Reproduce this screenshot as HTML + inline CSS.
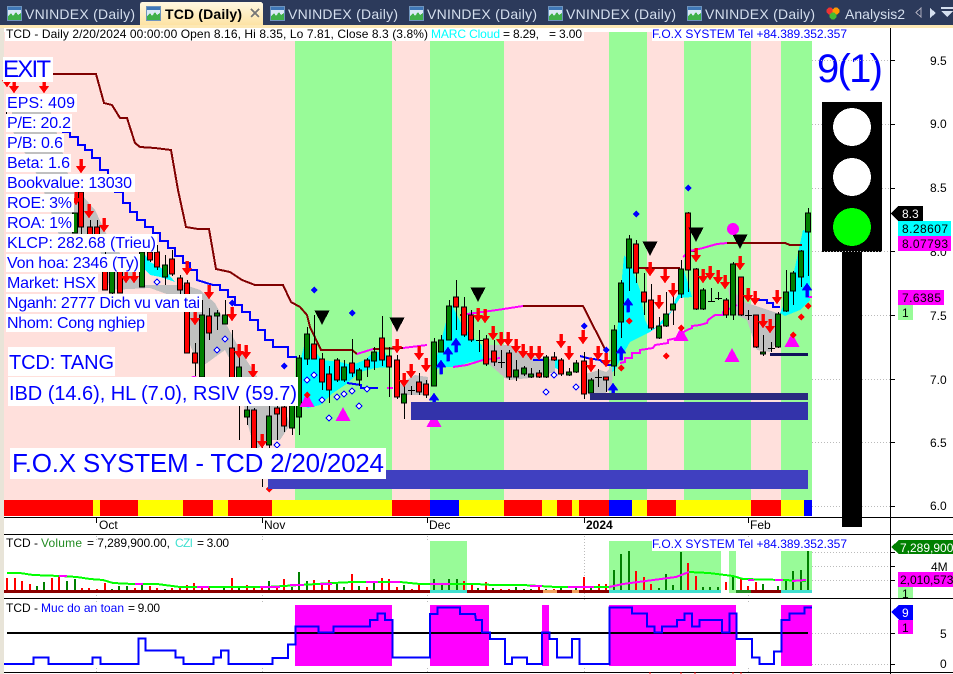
<!DOCTYPE html>
<html><head><meta charset="utf-8"><title>TCD (Daily)</title>
<style>
html,body{margin:0;padding:0;background:#fff;overflow:hidden}
svg{display:block;shape-rendering:crispEdges;font-family:"Liberation Sans",sans-serif}
.t{font-size:12px;fill:#000}
.l{font-size:16px;fill:#0000ff}
.tab{font-size:14px;fill:#d5dfee}
</style></head><body>
<svg width="953" height="674" viewBox="0 0 953 674" xmlns="http://www.w3.org/2000/svg">
<defs>
<path id="d" d="M-1.5-14h3v7h3.5L0 0-5-7h3.5z" fill="#f00" stroke="#f00" stroke-width=".4"/>
<path id="u" d="M-1.5 14h3V7H5L0 0-5 7h3.5z" fill="#00f" stroke="#00f" stroke-width=".4"/>
<path id="tr" d="M0-14L7.5 0h-15z" fill="#f0f"/>
<path id="bt" d="M0 0L-7.5-14.500h15z" fill="#000"/>
<path id="bd" d="M0-3.500L3.500 0 0 3.500-3.500 0z" fill="#00f"/>
<path id="rd" d="M0-3.500L3.500 0 0 3.500-3.500 0z" fill="#f00"/>
<path id="hd" d="M0-3L3 0 0 3-3 0z" fill="#fff" stroke="#00f"/>
<g id="ic"><rect x=".5" y=".5" width="14" height="14" fill="#dbe9f6" stroke="#6f94bd"/><rect x="1" y="1" width="13" height="3" fill="#3f78b8"/><path d="M1 14V10L4 7l2 3 3-4 2 3 3-2v7z" fill="#3fb04a"/></g>
<linearGradient id="at" x1="0" y1="0" x2="0" y2="1"><stop offset="0" stop-color="#fff8e2"/><stop offset="1" stop-color="#fde3a4"/></linearGradient>
</defs>

<!-- tab bar -->
<rect width="953" height="25" fill="#2c3a5b"/>
<rect y="25" width="953" height="3" fill="#fde8b4"/>
<rect y="28" width="4" height="646" fill="#e8e4d8"/>
<path d="M140 25V5q0-3 3-3h117q3 0 3 3v20z" fill="url(#at)"/>
<use href="#ic" x="7" y="6"/><use href="#ic" x="146" y="6"/><use href="#ic" x="270" y="6"/><use href="#ic" x="409" y="6"/><use href="#ic" x="548" y="6"/><use href="#ic" x="687" y="6"/>
<text class="tab" x="25" y="19" textLength="110">VNINDEX (Daily)</text>
<text x="165" y="19" font-size="14" font-weight="bold" fill="#000" textLength="77">TCD (Daily)</text>
<path d="M251 9l8 8M259 9l-8 8" stroke="#777" stroke-width="1.500" fill="none"/>
<text class="tab" x="288" y="19" textLength="110">VNINDEX (Daily)</text>
<text class="tab" x="427" y="19" textLength="110">VNINDEX (Daily)</text>
<text class="tab" x="566" y="19" textLength="110">VNINDEX (Daily)</text>
<text class="tab" x="705" y="19" textLength="110">VNINDEX (Daily)</text>
<circle cx="830" cy="11" r="3.500" fill="#e33"/><circle cx="836" cy="11" r="3.500" fill="#f90"/><circle cx="833" cy="16" r="3.500" fill="#4b3"/>
<text class="tab" x="845" y="19" textLength="60">Analysis2</text>
<path d="M921 8v9l-5-4.500z" fill="none" stroke="#aab"/>
<path d="M930 8v10l6-5z" fill="#d5dfee"/>
<path d="M941 7h12v2h-12zM941 11h12l-6 6z" fill="#d5dfee"/>

<!-- main pane -->
<rect x="4" y="28" width="949" height="646" fill="#fff"/>
<g>
<rect x="4" y="32" width="291" height="468" fill="#ffe0dc"/>
<rect x="295" y="32" width="97" height="468" fill="#98fb98"/>
<rect x="392" y="32" width="38" height="468" fill="#ffe0dc"/>
<rect x="430" y="32" width="74" height="468" fill="#98fb98"/>
<rect x="504" y="32" width="105" height="468" fill="#ffe0dc"/>
<rect x="609" y="32" width="38" height="468" fill="#98fb98"/>
<rect x="647" y="32" width="37" height="468" fill="#ffe0dc"/>
<rect x="684" y="32" width="67" height="468" fill="#98fb98"/>
<rect x="751" y="32" width="30" height="468" fill="#ffe0dc"/>
<rect x="781" y="32" width="31" height="468" fill="#98fb98"/>
</g>
<!-- signal bar -->
<g>
<rect x="4" y="500" width="89" height="16" fill="#f00"/><rect x="93" y="500" width="7" height="16" fill="#ff0"/><rect x="100" y="500" width="38" height="16" fill="#f00"/><rect x="138" y="500" width="45" height="16" fill="#ff0"/><rect x="183" y="500" width="30" height="16" fill="#f00"/><rect x="213" y="500" width="15" height="16" fill="#ff0"/><rect x="228" y="500" width="44" height="16" fill="#f00"/><rect x="272" y="500" width="120" height="16" fill="#ff0"/><rect x="392" y="500" width="38" height="16" fill="#f00"/><rect x="430" y="500" width="29" height="16" fill="#00f"/><rect x="459" y="500" width="45" height="16" fill="#ff0"/><rect x="504" y="500" width="38" height="16" fill="#f00"/><rect x="542" y="500" width="15" height="16" fill="#ff0"/><rect x="557" y="500" width="15" height="16" fill="#f00"/><rect x="572" y="500" width="7" height="16" fill="#ff0"/><rect x="579" y="500" width="30" height="16" fill="#f00"/><rect x="609" y="500" width="23" height="16" fill="#00f"/><rect x="632" y="500" width="15" height="16" fill="#ff0"/><rect x="647" y="500" width="29" height="16" fill="#f00"/><rect x="676" y="500" width="75" height="16" fill="#ff0"/><rect x="751" y="500" width="30" height="16" fill="#f00"/><rect x="781" y="500" width="23" height="16" fill="#ff0"/><rect x="804" y="500" width="8" height="16" fill="#00f"/>
</g>
<!-- clouds -->
<g fill="#c0c0c0">
<polygon points="12,105 50,110 62,150 72,190 82,195 95,210 107,235 118,250 130,270 145,285 185,285 200,290 215,303 225,322 240,350 258,378 268,398 285,410 290,425 280,440 270,440 255,450 248,425 238,375 225,350 200,368 190,345 183,300 150,288 110,290 100,250 70,240 60,238 40,180 12,130"/>
<polygon points="398,385 415,375 428,377 428,395 400,395"/>
<polygon points="484,345 510,345 530,356 555,360 555,372 530,378 510,380 505,378 490,365 484,360"/>
<polygon points="581,375 600,370 606,372 613,366 612,385 604,395 590,395 584,390"/>
<polygon points="728,287 747,303 777,313 775,345 770,352 757,350 747,320 732,313"/>
</g>
<g fill="#00ffff">
<polygon points="143,252 150,262 165,270 175,282 160,277 150,275 143,268"/>
<polygon points="298,370 303,350 307,335 311,346 322,360 340,362 352,365 365,360 373,352 385,352 392,365 390,367 375,368 360,372 345,385 333,393 320,405 308,408 302,405"/>
<polygon points="433,370 440,345 447,318 452,305 462,325 470,335 482,345 483,360 470,362 455,367 445,367"/>
<polygon points="612,372 616,345 624,255 630,262 640,290 645,320 650,330 657,327 662,320 672,310 675,300 681,290 684,270 690,290 692,297 680,298 665,322 650,332 630,342 620,360 615,370"/>
<polygon points="780,313 790,290 803,230 810,232 810,300 800,310 785,316"/>
<polygon points="555,358 562,362 560,370 555,368"/>
</g>
<!-- dark red line -->
<g fill="none" stroke-width="2">
<polyline stroke="#800000" points="53,74 96,74 104,103 112,105 120,118 127,118 135,143 140,147 155,148 171,150 178,190 186,227 198,229 209,229 216,269 230,272 242,280 255,285 283,285 291,302 300,307 307,315 310,327 321,350 352,350 357,354"/>
<polyline stroke="#800000" points="373,349 403,348"/>
<polyline stroke="#800000" points="460,315 467,314"/>
<polyline stroke="#800000" points="523,306 583,306 607,353"/>
<polyline stroke="#800000" points="638,268 680,268"/>
<polyline stroke="#800000" points="690,251 697,251"/>
<polyline stroke="#800000" points="727,243 785,243 790,245 802,245"/>
<!-- blue stair -->
<polyline stroke="#00f" points="62,132 70,132 70,137 78,137 78,145 85,145 85,150 92,150 92,158 100,158 100,170 108,170 108,180 115,180 115,192 123,192 123,203 130,203 130,212 137,212 137,220 145,220 145,227 153,227 153,233 160,233 160,241 168,241 168,248 175,248 175,256 183,256 183,263 190,263 190,270 197,270 197,280 213,285 220,285 220,290 228,290 228,297 235,297 235,305 242,305 242,312 250,312 250,320 258,320 258,330 265,330 265,340 273,340 273,347 288,347 288,357 297,357"/>
<polyline stroke="#00f" points="347,383 361,385 361,388 378,388"/>
<polyline stroke="#00f" points="533,360 543,360"/>
<polyline stroke="#00f" points="580,356 587,358 600,360 606,365 612,365"/>
<polyline stroke="#00f" points="757,300 767,300 767,303 773,303 773,307 780,307"/>
<!-- magenta -->
<polyline stroke="#f0f" points="357,354 373,349"/>
<polyline stroke="#f0f" points="387,388 393,388"/>
<polyline stroke="#f0f" points="403,348 427,345"/>
<polyline stroke="#f0f" points="467,314 497,310 523,306"/>
<polyline stroke="#f0f" points="683,257 690,251 703,248 717,244 727,243"/>
<polyline stroke="#f0f" points="453,367 467,365 483,360 500,358"/>
<polyline stroke="#f0f" points="620,363 625,362 625,358 632,358 632,353 640,353 640,350 653,348 655,345 668,343 668,340 677,338 682,333 687,330 692,328 692,326 700,325 707,323 708,320 715,315 723,315 723,312 737,305"/>
<polyline stroke="#f0f" points="808,297 812,297"/>
</g>
<!-- wicks -->
<path fill="none" stroke="#000" d="M6.500 100V123M81.500 188V240M90.500 220V250M97.500 220V250M105.500 250V290M112.500 255V300M120.500 262V293M142.500 245V287M150.500 245V262M157.500 245V270M165.500 255V285M172.500 250V276M180.500 275V295M187.500 280V353M195.500 343V376M202.500 300V378M209.500 308V340M217.500 310V330M225.500 300V324M232.500 330V380M239.500 345V440M247.500 400V425M254.500 408V450M262.500 445V487M269.500 405V450M277.500 395V440M284.500 400V432M292.500 400V435M299.500 355V435M307.500 327V365M314.500 315V359M322.500 353V390M329.500 366V403M337.500 358V382M344.500 360V382M352.500 339V377M359.500 368V386M367.500 358V377M374.500 347V370M382.500 316V366M389.500 347V397M397.500 355V399M404.500 385V419M411.500 386V395M419.500 373V395M426.500 380V398M434.500 338V386M441.500 335V352M449.500 300V340M456.500 280V330M464.500 297V337M471.500 310V342M479.500 330V352M486.500 335V366M494.500 340V366M501.500 350V368M509.500 350V380M516.500 360V381M524.500 366V376M531.500 368V378M539.500 370V378M546.500 355V378M554.500 352V361M561.500 358V376M569.500 368V376M576.500 360V373M584.500 352V399M591.500 378V395M598.500 369V387M606.500 378V392M614.500 325V376M621.500 280V338M629.500 235V291M636.500 240V283M644.500 273V315M651.500 284V330M659.500 317V339M666.500 292V327M673.500 284V325M681.500 260V298M688.500 212V292M696.500 268V310M703.500 288V310M711.500 288V302M718.500 292V300M726.500 298V318M733.500 262V320M741.500 277V316M748.500 310V320M756.500 315V348M763.500 335V356M771.500 342V352M778.500 312V348M786.500 270V312M793.500 271V305M801.500 250V287M808.500 208V276M408 390.500h7M476 340.500h7M498 362.500h7M595 377.500h7M708 301.500h7M715 298.500h7M745 315.500h7M768 348.500h7"/>
<!-- red bodies -->
<path fill="#f00" stroke="#000" d="M78.500 192h5V227h-5zM87.500 227h5V250h-5zM94.500 227h5V250h-5zM102.500 262h5V290h-5zM117.500 262h5V293h-5zM147.500 252h5V260h-5zM154.500 252h5V267h-5zM169.500 259h5V274h-5zM177.500 278h5V290h-5zM184.500 283h5V353h-5zM192.500 353h5V363h-5zM206.500 316h5V333h-5zM229.500 348h5V380h-5zM251.500 410h5V450h-5zM274.500 408h5V414h-5zM281.500 407h5V426h-5zM311.500 344h5V359h-5zM319.500 359h5V382h-5zM326.500 374h5V390h-5zM334.500 360h5V380h-5zM349.500 363h5V373h-5zM364.500 360h5V367h-5zM379.500 338h5V360h-5zM386.500 356h5V367h-5zM394.500 360h5V397h-5zM416.500 382h5V392h-5zM423.500 384h5V395h-5zM453.500 297h5V307h-5zM461.500 307h5V335h-5zM468.500 315h5V340h-5zM483.500 339h5V364h-5zM491.500 351h5V362h-5zM506.500 353h5V377h-5zM536.500 373h5V377h-5zM551.500 357h5V360h-5zM558.500 360h5V374h-5zM581.500 361h5V394h-5zM603.500 377h5V380h-5zM633.500 244h5V273h-5zM641.500 292h5V302h-5zM648.500 300h5V328h-5zM685.500 213h5V270h-5zM693.500 269h5V309h-5zM723.500 300h5V315h-5zM738.500 277h5V315h-5zM753.500 315h5V347h-5z"/>
<!-- green bodies -->
<path fill="#008000" stroke="#000" d="M72.500 213h5V233h-5zM109.500 255h5V293h-5zM139.500 252h5V287h-5zM162.500 265h5V277h-5zM199.500 315h5V377h-5zM214.500 313h5V316h-5zM222.500 315h5V324h-5zM236.500 367h5V385h-5zM244.500 410h5V417h-5zM266.500 416h5V445h-5zM289.500 405h5V428h-5zM296.500 358h5V417h-5zM304.500 334h5V359h-5zM341.500 367h5V380h-5zM356.500 370h5V380h-5zM371.500 352h5V361h-5zM401.500 394h5V403h-5zM431.500 342h5V386h-5zM438.500 340h5V352h-5zM446.500 306h5V340h-5zM513.500 370h5V377h-5zM521.500 368h5V374h-5zM528.500 374h5V377h-5zM543.500 357h5V377h-5zM566.500 372h5V375h-5zM573.500 363h5V372h-5zM588.500 380h5V393h-5zM611.500 330h5V366h-5zM618.500 283h5V322h-5zM626.500 239h5V268h-5zM656.500 326h5V338h-5zM663.500 314h5V326h-5zM670.500 304h5V310h-5zM678.500 269h5V294h-5zM700.500 290h5V309h-5zM730.500 264h5V315h-5zM760.500 352h5V354h-5zM775.500 314h5V347h-5zM783.500 292h5V311h-5zM790.500 273h5V291h-5zM798.500 251h5V277h-5zM805.500 213h5V232h-5z"/>
<!-- arrows and markers -->
<g>
<use href="#d" x="7" y="87"/><use href="#d" x="14" y="93"/><use href="#d" x="44" y="93"/><use href="#d" x="81" y="173"/><use href="#d" x="76" y="205"/><use href="#d" x="89" y="218"/><use href="#d" x="104" y="232"/><use href="#d" x="187" y="275"/><use href="#d" x="126" y="283"/><use href="#d" x="134" y="283"/><use href="#d" x="209" y="299"/><use href="#d" x="232" y="321"/><use href="#d" x="195" y="325"/><use href="#d" x="239" y="358"/><use href="#d" x="246" y="359"/><use href="#d" x="253" y="378"/><use href="#d" x="262" y="448"/>
<use href="#d" x="397" y="353"/><use href="#d" x="419" y="360"/><use href="#d" x="411" y="378"/><use href="#d" x="404" y="387"/><use href="#d" x="426" y="372"/><use href="#d" x="478" y="322"/><use href="#d" x="485" y="323"/><use href="#d" x="493" y="340"/><use href="#d" x="501" y="346"/><use href="#d" x="508" y="346"/><use href="#d" x="516" y="353"/><use href="#d" x="523" y="358"/><use href="#d" x="531" y="360"/><use href="#d" x="539" y="360"/><use href="#d" x="561" y="348"/><use href="#d" x="569" y="360"/><use href="#d" x="583" y="344"/><use href="#d" x="591" y="372"/><use href="#d" x="598" y="360"/><use href="#d" x="606" y="367"/>
<use href="#d" x="650" y="276"/><use href="#d" x="665" y="283"/><use href="#d" x="673" y="297"/><use href="#d" x="659" y="309"/><use href="#d" x="696" y="262"/><use href="#d" x="703" y="283"/><use href="#d" x="710" y="280"/><use href="#d" x="718" y="284"/><use href="#d" x="725" y="289"/><use href="#d" x="740" y="270"/><use href="#d" x="748" y="302"/><use href="#d" x="755" y="305"/><use href="#d" x="763" y="328"/><use href="#d" x="770" y="333"/><use href="#d" x="777" y="304"/>
<use href="#u" x="456" y="338"/><use href="#u" x="448" y="347"/><use href="#u" x="441" y="360"/><use href="#u" x="434" y="393"/><use href="#u" x="628" y="298"/><use href="#u" x="621" y="346"/><use href="#u" x="613" y="383"/><use href="#u" x="807" y="283"/>
<use href="#tr" x="343" y="421"/><use href="#tr" x="307" y="407"/><use href="#tr" x="434" y="427"/><use href="#tr" x="732" y="362"/><use href="#tr" x="792" y="347"/><use href="#tr" x="681" y="341"/>
<use href="#bt" x="322" y="325"/><use href="#bt" x="397" y="332"/><use href="#bt" x="478" y="302"/><use href="#bt" x="650" y="256"/><use href="#bt" x="696" y="242"/><use href="#bt" x="740" y="249"/>
<circle cx="733" cy="229" r="6" fill="#f0f"/><circle cx="194" cy="381" r="5" fill="#f0f"/>
<use href="#bd" x="314" y="290"/><use href="#bd" x="352" y="313"/><use href="#bd" x="584" y="326"/><use href="#bd" x="606" y="350"/><use href="#bd" x="688" y="188"/><use href="#bd" x="636" y="214"/><use href="#bd" x="232" y="303"/><use href="#bd" x="284" y="366"/>
<use href="#rd" x="307" y="395"/><use href="#rd" x="621" y="368"/><use href="#rd" x="629" y="321"/><use href="#rd" x="666" y="356"/><use href="#rd" x="681" y="328"/><use href="#rd" x="793" y="335"/><use href="#rd" x="801" y="317"/><use href="#rd" x="808" y="306"/><use href="#rd" x="269" y="489"/>
<use href="#hd" x="307" y="380"/><use href="#hd" x="314" y="375"/><use href="#hd" x="322" y="400"/><use href="#hd" x="329" y="418"/><use href="#hd" x="337" y="397"/><use href="#hd" x="344" y="394"/><use href="#hd" x="352" y="391"/><use href="#hd" x="359" y="406"/><use href="#hd" x="367" y="389"/><use href="#hd" x="546" y="392"/><use href="#hd" x="554" y="375"/><use href="#hd" x="576" y="387"/><use href="#hd" x="225" y="339"/><use href="#hd" x="217" y="350"/><use href="#hd" x="277" y="445"/><use href="#hd" x="157" y="282"/>
</g>
<!-- flat bars -->
<rect x="268" y="470" width="540" height="19" fill="#4040c0"/>
<rect x="411" y="402" width="397" height="18" fill="#3333aa"/>
<rect x="590" y="393" width="218" height="7" fill="#2a2a80"/>
<rect x="770" y="353" width="38" height="3" fill="#10105a"/>

<!-- header -->
<rect x="5" y="28" width="579" height="13" fill="#fff"/>
<rect x="652" y="28" width="195" height="13" fill="#fff"/>
<text class="t" x="6" y="38" textLength="422">TCD - Daily 2/20/2024 00:00:00 Open 8.16, Hi 8.35, Lo 7.81, Close 8.3 (3.8%)</text>
<text class="t" x="431" y="38" style="fill:#00ffff" textLength="69">MARC Cloud</text>
<text class="t" x="503" y="38" textLength="36">= 8.29,</text>
<text class="t" x="549" y="38" textLength="33">= 3.00</text>
<text class="t" x="652" y="38" style="fill:#0000ff" textLength="195">F.O.X SYSTEM Tel +84.389.352.357</text>

<!-- overlay labels -->
<g fill="#fff">
<rect x="3" y="57" width="50" height="25"/><rect x="6" y="94" width="71" height="18"/><rect x="6" y="114" width="66" height="18"/><rect x="6" y="134" width="58" height="18"/><rect x="6" y="154" width="65" height="18"/><rect x="6" y="174" width="129" height="18"/><rect x="6" y="194" width="68" height="18"/><rect x="6" y="214" width="68" height="18"/><rect x="6" y="234" width="151" height="18"/><rect x="6" y="254" width="134" height="18"/><rect x="6" y="274" width="92" height="18"/><rect x="6" y="294" width="196" height="18"/><rect x="6" y="314" width="141" height="18"/>
<rect x="8" y="347" width="107" height="29"/><rect x="8" y="377" width="290" height="29"/><rect x="10" y="448" width="376" height="31"/>
</g>
<text x="3" y="77" font-size="24" fill="#00f" textLength="48">EXIT</text>
<text class="l" x="7" y="108" textLength="68">EPS: 409</text>
<text class="l" x="7" y="128" textLength="64">P/E: 20.2</text>
<text class="l" x="7" y="148" textLength="56">P/B: 0.6</text>
<text class="l" x="7" y="168" textLength="63">Beta: 1.6</text>
<text class="l" x="7" y="188" textLength="125">Bookvalue: 13030</text>
<text class="l" x="7" y="208" textLength="65">ROE: 3%</text>
<text class="l" x="7" y="228" textLength="65">ROA: 1%</text>
<text class="l" x="7" y="248" textLength="149">KLCP: 282.68 (Trieu)</text>
<text class="l" x="7" y="268" textLength="132">Von hoa: 2346 (Ty)</text>
<text class="l" x="7" y="288" textLength="89">Market: HSX</text>
<text class="l" x="7" y="308" textLength="193">Nganh: 2777 Dich vu van tai</text>
<text class="l" x="7" y="328" textLength="138">Nhom: Cong nghiep</text>
<text x="9" y="369" font-size="20" fill="#00f" textLength="105">TCD: TANG</text>
<text x="9" y="400" font-size="20" fill="#00f" textLength="288">IBD (14.6), HL (7.0), RSIV (59.7)</text>
<text x="12" y="472" font-size="26" fill="#00f" textLength="372">F.O.X SYSTEM - TCD 2/20/2024</text>

<!-- traffic light -->
<rect x="822" y="102" width="60" height="150" fill="#000"/>
<rect x="842" y="252" width="20" height="275" fill="#000"/>
<circle cx="852" cy="127" r="19" fill="#fff"/><circle cx="852" cy="177" r="19" fill="#fff"/><circle cx="852" cy="227" r="19" fill="#0f0"/>
<text x="817" y="82" font-size="40" fill="#00f" textLength="66">9(1)</text>

<!-- axes -->
<g fill="none" stroke="#bbb" stroke-dasharray="1 2">
<path d="M812 60.500H890M812 124.500H822M882 124.500H890M812 188.500H822M882 188.500H890M812 251.500H890M812 315.500H842M862 315.500H890M812 379.500H842M862 379.500H890M812 442.500H842M862 442.500H890M812 506.500H842M862 506.500H890"/>
<path d="M812 552.500H890M812 566.500H890M812 580.500H890M812 633.500H890M812 664.500H890"/>
<path d="M96.500 536V541M262.500 536V541M427.500 536V541M584.500 536V600M748.500 536V541M96.500 592V602M262.500 592V602M427.500 592V602M748.500 592V602M96.500 668V674M262.500 668V674M427.500 668V674M584.500 668V674M748.500 668V674"/>
</g>
<path fill="none" stroke="#000" d="M890.500 28V674M890 60.500h5M890 124.500h5M890 188.500h5M890 251.500h5M890 315.500h5M890 379.500h5M890 442.500h5M890 506.500h5M890 552.500h5M890 566.500h5M890 580.500h5M890 633.500h5M890 664.500h5M96.500 518v5M262.500 518v5M427.500 518v5M584.500 518v5M748.500 518v5"/>
<rect x="4" y="517" width="949" height="1" fill="#000"/>
<rect x="4" y="534" width="949" height="1" fill="#000"/>
<rect x="4" y="598" width="949" height="1" fill="#000"/>
<rect x="4" y="672" width="949" height="1" fill="#000"/>
<text class="t" x="930" y="65">9.5</text><text class="t" x="930" y="128">9.0</text><text class="t" x="930" y="192">8.5</text><text class="t" x="930" y="256">8.0</text><text class="t" x="930" y="320">7.5</text><text class="t" x="930" y="384">7.0</text><text class="t" x="930" y="447">6.5</text><text class="t" x="930" y="510">6.0</text>
<text class="t" x="99" y="529">Oct</text><text class="t" x="264" y="529">Nov</text><text class="t" x="429" y="529">Dec</text><text class="t" x="586" y="529" font-weight="bold">2024</text><text class="t" x="750" y="529">Feb</text>

<!-- price tags -->
<path d="M891 213.500L898 206H923V221H898z" fill="#000"/>
<text class="t" x="902" y="218" style="fill:#fff">8.3</text>
<rect x="898" y="221" width="53" height="15" fill="#0ff"/><text class="t" x="902" y="233" textLength="46">8.28607</text>
<rect x="898" y="236" width="53" height="15" fill="#f0f"/><text class="t" x="902" y="248" textLength="46">8.07793</text>
<rect x="898" y="290" width="46" height="15" fill="#f0f"/><text class="t" x="902" y="302" textLength="39">7.6385</text>
<rect x="898" y="305" width="15" height="15" fill="#98fb98"/><text class="t" x="902" y="317">1</text>

<!-- volume pane -->
<g fill="#98fb98"><rect x="430" y="541" width="37" height="52"/><rect x="609" y="541" width="112" height="52"/><rect x="729" y="551" width="7" height="42"/><rect x="781" y="551" width="31" height="42"/></g>
<rect x="4" y="590" width="426" height="3" fill="#8b0000"/><rect x="430" y="590" width="37" height="3" fill="#40e0d0"/><rect x="467" y="590" width="142" height="3" fill="#8b0000"/><rect x="543" y="590" width="14" height="3" fill="#f4a460"/><rect x="572" y="590" width="7" height="3" fill="#f4a460"/><rect x="609" y="590" width="112" height="3" fill="#40e0d0"/><rect x="736" y="590" width="15" height="3" fill="#228b22"/><rect x="751" y="590" width="30" height="3" fill="#8b0000"/><rect x="781" y="590" width="31" height="3" fill="#40e0d0"/>
<path fill="none" stroke-width="2" stroke="#f00" d="M7 590V578M15 590V578M22 590V581M30 590V584M52 590V578M59 590V576M82 590V588M89 590V588M97 590V589M105 590V583M135 590V588M150 590V586M157 590V588M172 590V588M180 590V587M187 590V585M194 590V583M202 590V587M209 590V588M232 590V578M247 590V585M254 590V587M262 590V588M277 590V587M284 590V579M314 590V580M322 590V585M329 590V580M352 590V574M367 590V587M382 590V578M389 590V579M397 590V587M412 590V589M419 590V584M464 590V581M472 590V585M486 590V582M501 590V589M509 590V589M539 590V587M554 590V589M569 590V590M584 590V577M599 590V584M606 590V584M636 590V571M644 590V577M651 590V584M688 590V563M696 590V576M726 590V582M741 590V579M748 590V586M756 590V582"/>
<path fill="none" stroke-width="2" stroke="#008000" d="M37 590V586M44 590V582M67 590V581M75 590V579M112 590V589M119 590V586M127 590V586M142 590V583M165 590V589M224 590V588M239 590V587M269 590V581M292 590V587M299 590V572M307 590V581M337 590V582M344 590V587M359 590V586M374 590V582M404 590V585M434 590V579M442 590V583M449 590V579M457 590V579M478 590V588M493 590V588M516 590V587M524 590V589M531 590V589M546 590V589M561 590V588M576 590V588M591 590V587M614 590V570M621 590V554M629 590V551M659 590V588M666 590V574M673 590V585M681 590V552M703 590V587M710 590V587M718 590V587M733 590V577M763 590V584M778 590V586M786 590V580M793 590V571M801 590V570M808 590V551"/>
<polyline fill="none" stroke="#0f0" stroke-width="2" points="7,573 20,573 33,575 60,576 77,577 90,579 103,580 113,583 133,584 157,584 180,587 223,587 267,587 300,585 333,583 353,582 400,582 420,584 476,584 493,585 523,585 556,587 609,587 623,584 676,577 689,572 709,573 733,576 743,579 783,580 806,581"/>
<path fill="none" stroke="#f0f" stroke-width="2" d="M59 576h8M135 584h8M197 587h12M260 587h20M290 585h14M320 584h12M366 582h12M390 582h10M430 584h20M530 586h12M568 587h26M609 587L623 584 676 577 689 572M748 580h6M775 580h8M792 581L806 580"/>
<rect x="652" y="537" width="195" height="14" fill="#fff"/>
<text class="t" x="652" y="548" style="fill:#0000ff" textLength="195">F.O.X SYSTEM Tel +84.389.352.357</text>
<text class="t" x="6" y="547" textLength="32">TCD -</text>
<text class="t" x="41" y="547" style="fill:#228b22" textLength="41">Volume</text>
<text class="t" x="87" y="547" textLength="83">= 7,289,900.00,</text>
<text class="t" x="175" y="547" style="fill:#40e0d0" textLength="18">CZI</text>
<text class="t" x="197" y="547" textLength="32">= 3.00</text>
<path d="M891 547L899 540H953V554H899z" fill="#008000"/>
<text class="t" x="900" y="552" style="fill:#fff">7,289,900</text>
<text class="t" x="931" y="571">4M</text>
<rect x="898" y="572" width="55" height="15" fill="#f0f"/><text class="t" x="900" y="584">2,010,573</text>
<rect x="898" y="587" width="15" height="11" fill="#98fb98"/><text class="t" x="902" y="598">1</text>

<!-- lower pane -->
<g fill="#f0f"><rect x="295" y="605" width="97" height="61"/><rect x="430" y="605" width="59" height="61"/><rect x="542" y="605" width="7" height="61"/><rect x="609" y="605" width="127" height="61"/><rect x="781" y="605" width="31" height="61"/></g>
<rect x="7" y="632" width="801" height="2" fill="#000"/>
<g transform="translate(0 490) scale(.33333)"><polyline fill="none" stroke="#00f" stroke-width="6" points="12,522 100,522 100,503 145,503 145,522 278,522 278,503 302,503 302,522 415,522 415,446 437,446 437,482 527,482 527,502 550,502 550,522 640,522 640,503 663,503 663,482 685,482 685,522 818,522 818,504 864,504 864,464 886,464 886,410 955,410 955,428 1000,428 1000,410 1110,410 1110,390 1133,390 1133,371 1155,371 1155,390 1178,390 1178,503 1290,503 1290,372 1313,372 1313,353 1380,353 1380,372 1425,372 1428,390 1446,390 1446,428 1470,428 1470,447 1515,447 1515,522 1536,522 1536,503 1581,503 1581,522 1626,522 1626,428 1648,428 1648,447 1671,447 1671,503 1716,503 1716,447 1739,447 1739,522 1828,522 1828,353 1896,353 1896,371 1941,371 1941,410 1963,410 1963,428 1986,428 1986,410 2031,410 2031,390 2053,390 2053,371 2076,371 2076,410 2098,410 2098,390 2166,390 2166,428 2188,428 2188,371 2210,371 2210,447 2256,447 2256,503 2278,503 2278,522 2322,522 2322,484 2345,484 2345,390 2368,390 2368,371 2413,371 2413,353 2436,353"/></g>
<text class="t" x="6" y="612" textLength="32">TCD -</text>
<text class="t" x="41" y="612" style="fill:#0000ff" textLength="83">Muc do an toan</text>
<text class="t" x="128" y="612" textLength="32">= 9.00</text>
<path d="M891 612L899 605H913V620H899z" fill="#00f"/>
<text class="t" x="902" y="617" style="fill:#fff">9</text>
<rect x="898" y="620" width="15" height="14" fill="#f0f"/><text class="t" x="902" y="632">1</text>
<text class="t" x="940" y="638">5</text><text class="t" x="940" y="668">0</text>
<path d="M650 674v-2M681 674v-2M695 674v-2M733 674v-2M741 674v-2" stroke="#f00" fill="none"/>
</svg>
</body></html>
